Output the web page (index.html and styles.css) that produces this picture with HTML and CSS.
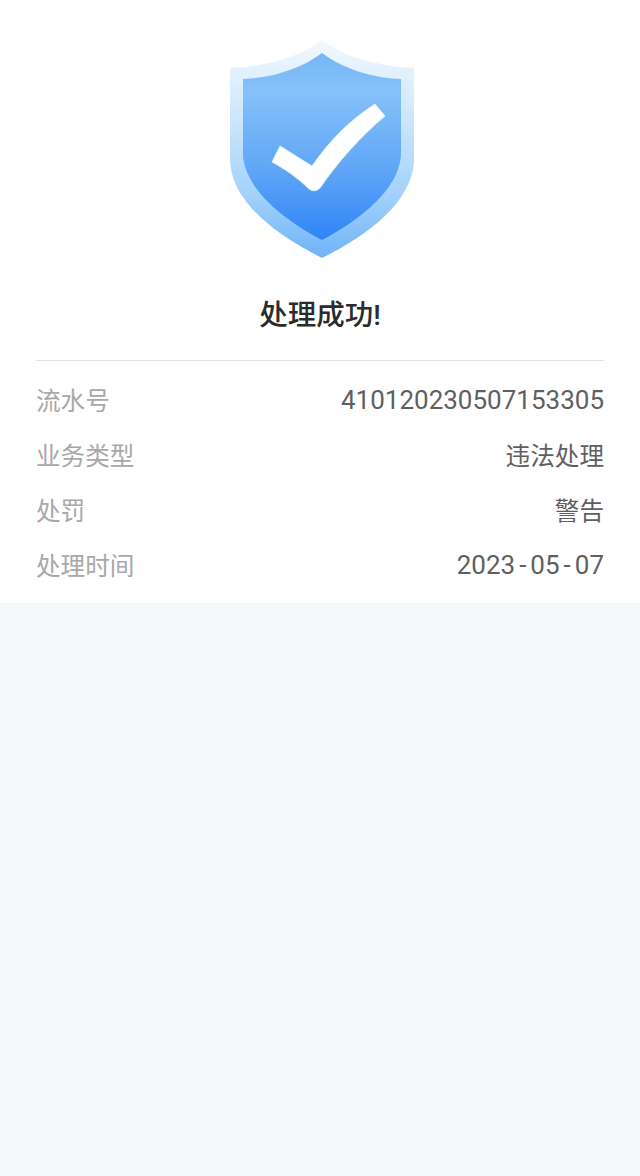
FILE: index.html
```html
<!DOCTYPE html>
<html lang="zh-CN">
<head>
  <meta charset="UTF-8" />
  <title>处理成功</title>
  <meta name="viewport" content="width=device-width, initial-scale=1.0"/>
  <link rel="stylesheet" href="styles.css">
</head>
<body>

  <section class="result">
    <svg class="shield" viewBox="0 0 184 220" width="184" height="220" aria-hidden="true">
      <defs>
        <linearGradient id="shieldOuter" x1="0" y1="0" x2="0" y2="1">
          <stop offset="0" stop-color="#f1f8fe"/>
          <stop offset="0.3" stop-color="#d3e9fc"/>
          <stop offset="0.7" stop-color="#a5d2fb"/>
          <stop offset="1" stop-color="#6fb3f8"/>
        </linearGradient>
        <linearGradient id="shieldInner" x1="0" y1="0" x2="0" y2="1">
          <stop offset="0" stop-color="#74b6f6"/>
          <stop offset="0.2" stop-color="#86c1f9"/>
          <stop offset="0.6" stop-color="#62a8f6"/>
          <stop offset="1" stop-color="#2f84f6"/>
        </linearGradient>
      </defs>
      <path d="M92 0 C72 16 38 26 0 28 L0 122 C3 162 44 194 92 218 C140 194 181 162 184 122 L184 28 C146 26 112 16 92 0 Z" fill="url(#shieldOuter)"/>
      <path d="M92 13 C74 27 44 38 13 39 L13 116 C16 150 54 180 92 200 C130 180 168 150 171 116 L171 39 C140 38 110 27 92 13 Z" fill="url(#shieldInner)"/>
      <path d="M50 106 L82 126 C100 100 120 80 145 64 L155 76 C130 97 108 122 90 148 Q85 153 79 149 C68 138 55 129 42 122 Z" fill="#fff" stroke="#dcedfd" stroke-width="1" stroke-linejoin="round"/>
    </svg>

    <h1>处理成功!</h1>

    <ul class="details">
      <li><span class="label">流水号</span><span class="value num">410120230507153305</span></li>
      <li><span class="label">业务类型</span><span class="value">违法处理</span></li>
      <li><span class="label">处罚</span><span class="value">警告</span></li>
      <li><span class="label">处理时间</span><span class="value num">2023<span class="dash">-</span>05<span class="dash">-</span>07</span></li>
    </ul>
  </section>

</body>
</html>
```

FILE: styles.css
```css
html, body {
  height: 100%;
}

body {
  margin: 0;
  background-color: #f4f9f9;
  font-family: Roboto, "Noto Sans CJK SC", sans-serif;
  color: #333;
}

.result {
  box-sizing: border-box;
  height: 603px;
  padding: 40px 36px 0;
  background-color: #fff;
  border-top: 2px solid #fffef9;
}

.shield {
  display: block;
  margin: -2px 0 0 194px;
  filter: blur(0.5px);
}

h1 {
  margin: 37px 0 0;
  height: 38px;
  line-height: 38px;
  font-size: 28.5px;
  font-weight: 500;
  text-align: center;
  color: #2b2b2b;
}

.details {
  list-style: none;
  margin: 25px 0 0;
  padding: 10px 0 0;
  border-top: 1px solid #e4e4e4;
}

.details li {
  display: flex;
  justify-content: space-between;
  align-items: center;
  height: 55px;
  font-size: 24.6px;
  font-weight: 400;
}

.label {
  color: #a8a8a8;
}

.value {
  color: #5f5f5f;
}

.num {
  font-size: 26px;
  padding-top: 3px;
}

.dash {
  padding: 0 4px;
}
```
